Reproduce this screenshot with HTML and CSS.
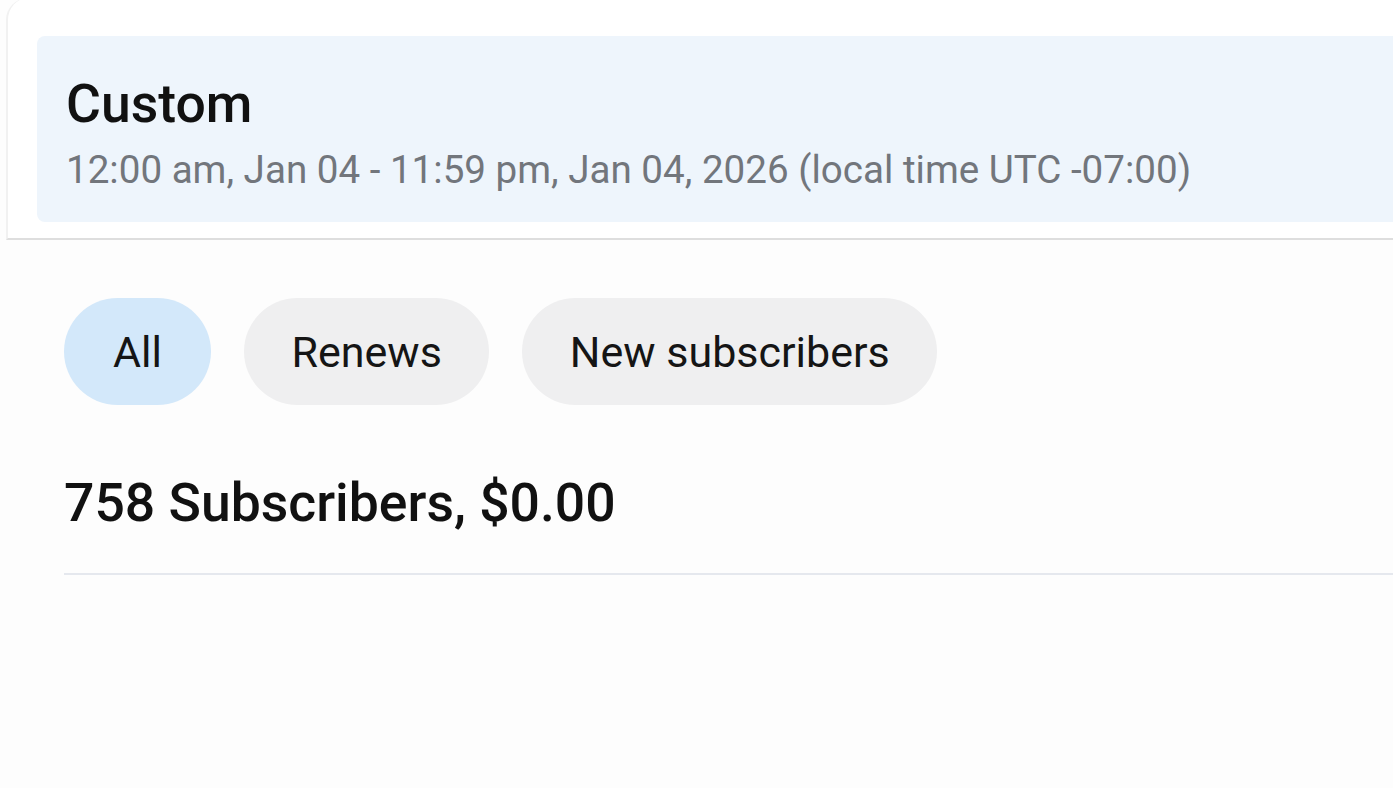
FILE: index.html
```html
<!DOCTYPE html>
<html lang="en">
<head>
<meta charset="utf-8">
<title>Subscribers</title>
<link rel="stylesheet" href="styles.css">
</head>
<body>
<div class="page">
  <section class="card">
    <div class="range">
      <div class="range-title">Custom</div>
      <div class="range-sub">12:00 am, Jan 04 - 11:59 pm, Jan 04, 2026 (local time UTC -07:00)</div>
    </div>
  </section>
  <div class="content">
    <div class="chips">
      <button class="chip chip-active">All</button>
      <button class="chip">Renews</button>
      <button class="chip">New subscribers</button>
    </div>
    <h2 class="summary">758 Subscribers, $0.00</h2>
    <hr class="divider">
  </div>
</div>
</body>
</html>
```
FILE: styles.css
```css
html, body {
  margin: 0;
  padding: 0;
  background: #fdfdfd;
}
body {
  font-family: Roboto, "Noto Sans", Arial, sans-serif;
  width: 1393px;
  height: 788px;
  overflow: hidden;
}
.page {
  display: flex;
  flex-direction: column;
}
.card {
  margin-left: 6px;
  margin-top: -2px;
  background: #ffffff;
  border-top-left-radius: 22px;
  border-left: 2px solid #f1f1f1;
  border-bottom: 2px solid #dedede;
  padding: 38px 0 16px 29px;
}
.range {
  background: #eef5fc;
  border-radius: 8px 0 0 8px;
  height: 186px;
  padding-left: 29px;
  box-sizing: border-box;
  padding-top: 39px;
}
.range-title {
  font-size: 53.5px;
  font-weight: 500;
  color: #111111;
  line-height: 58px;
}
.range-sub {
  margin-top: 15px;
  font-size: 38.6px;
  color: #72767c;
  line-height: 44px;
  white-space: nowrap;
}
.content {
  padding-left: 64px;
}
.chips {
  display: flex;
  gap: 33px;
  margin-top: 58px;
}
.chip {
  font-family: Roboto, "Noto Sans", Arial, sans-serif;
  font-size: 43px;
  color: #151515;
  height: 107px;
  padding: 0 47.5px;
  border: none;
  border-radius: 54px;
  background: #efeff0;
}
.chip-active {
  background: #d3e8fa;
  padding: 0 49px;
}
.summary {
  margin: 68px 0 0 0;
  font-size: 53.5px;
  font-weight: 500;
  color: #111111;
  line-height: 60px;
}
.divider {
  margin: 40px 0 0 0;
  border: none;
  border-top: 2px solid #e5e8ee;
}
```
